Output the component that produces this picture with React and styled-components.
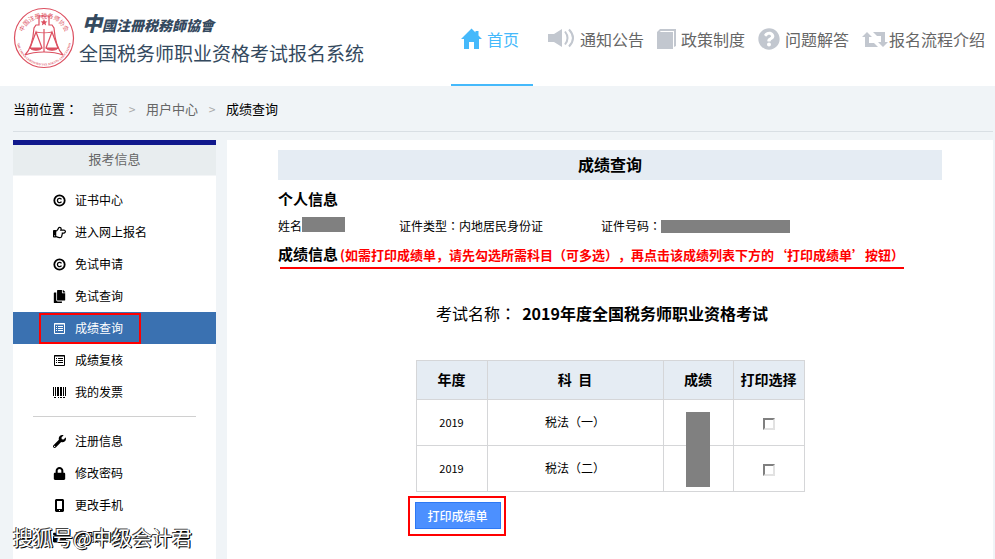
import React from "react";
import styled, { createGlobalStyle } from "styled-components";
import {
  FaRegHandPointRight,
  FaCopy,
  FaWrench,
  FaLock,
  FaQuestionCircle,
  FaEnvelope,
} from "react-icons/fa";

const GlobalStyle = createGlobalStyle`
  * {
    box-sizing: border-box;
  }

  body {
    margin: 0;
    background: #f0f4f7;
    color: #000;
    font-family: "Noto Sans CJK SC", "Noto Sans", sans-serif;
    font-size: 12px;
    text-spacing-trim: space-all;
  }

  a {
    color: inherit;
    text-decoration: none;
  }
`;

const Page = styled.div`
  position: relative;
  min-height: 100vh;
  display: flex;
  flex-direction: column;
`;

const Header = styled.header`
  height: 86px;
  padding: 0 10px 0 13px;
  display: flex;
  justify-content: space-between;
  background: #fff;
`;

const Brand = styled.a`
  display: flex;
  align-items: flex-start;
  gap: 4px;
  padding-top: 7px;
  color: #34495e;
  white-space: nowrap;
`;

const BrandText = styled.div`
  display: flex;
  flex-direction: column;
`;

const Association = styled.span`
  padding-left: 3px;
  font-size: 14px;
  font-style: italic;
  font-weight: 900;
  line-height: 32px;

  &::first-letter {
    font-size: 20px;
  }
`;

const SystemName = styled.span`
  font-size: 19px;
  line-height: 24px;
`;

const Nav = styled.nav`
  display: flex;
  gap: 13px;
`;

const NavLink = styled.a`
  display: flex;
  align-items: flex-start;
  gap: ${(props) => props.$gap || 5}px;
  margin-right: ${(props) => (props.$active ? 2 : 0)}px;
  padding: ${(props) => (props.$active ? "27px 14px 0 10px" : "27px 0 0")};
  border-bottom: 2px solid ${(props) => (props.$active ? "#45b9fb" : "transparent")};
  color: ${(props) => (props.$active ? "#45b9fb" : "#666")};
  font-size: 16px;
  line-height: 24px;
  white-space: nowrap;

  svg {
    height: 24px;
    color: ${(props) => (props.$active ? "#45b9fb" : "#c2c7cf")};
  }
`;

const Breadcrumb = styled.nav`
  display: flex;
  gap: 14px;
  height: 46px;
  margin: 0 2px 0 13px;
  border-bottom: 1px solid #d9dfe4;
  color: #666;
  font-size: 13px;
  line-height: 45px;

  strong {
    color: #000;
    font-weight: 400;
  }

  i {
    width: 0;
    display: flex;
    justify-content: center;
    color: #aaa;
    font-style: normal;
    font-size: 12px;
  }
`;

// the TC face sets the colon in the middle of its box
const Colon = styled.span`
  font-family: "Noto Sans CJK TC", sans-serif;
`;

const Body = styled.div`
  flex: 1;
  display: flex;
  gap: 11px;
  padding: 8px 2px 0 13px;
`;

const Sidebar = styled.aside`
  flex: 0 0 203px;
  background: #fff;
  border-top: 5px solid #10188c;
`;

const SidebarTitle = styled.h2`
  margin: 0;
  height: 31px;
  background: #e8edef;
  border-bottom: 1px solid #f3f5f7;
  color: #666;
  font-size: 13px;
  font-weight: 400;
  line-height: 28px;
  text-align: center;
`;

const Menu = styled.ul`
  list-style: none;
  margin: 0;
  padding: 8px 0;
`;

const Divider = styled.hr`
  margin: 0 20px;
  border: 0;
  border-top: 1px solid #d0d0d0;
`;

const MenuLink = styled.a`
  display: flex;
  align-items: center;
  height: 32px;
  padding-left: 26px;
  background: ${(props) => (props.$active ? "#3a71b1" : "transparent")};
  color: ${(props) => (props.$active ? "#fff" : "#000")};
`;

const MenuLabel = styled.span`
  display: flex;
  align-items: center;
  gap: 9px;
  height: 31px;
  padding: 0 16px 0 12px;
  border: 2px solid ${(props) => (props.$marked ? "#f00" : "transparent")};
  line-height: 20px;

  svg {
    width: 13px;
    height: 13px;
  }
`;

const Main = styled.main`
  flex: 1;
  padding: 10px 51px 0;
  background: #fff;
`;

const PageTitle = styled.h1`
  margin: 0 0 8px;
  padding-bottom: 2px;
  background: #e5ecf3;
  font-size: 16px;
  line-height: 28px;
  text-align: center;
`;

const SectionTitle = styled.h2`
  margin: 0;
  font-size: 15px;
  line-height: 22px;
  white-space: nowrap;
`;

const Notice = styled.small`
  margin-left: 2px;
  color: #f00;
  font-size: 13px;
`;

const Underlined = styled.div`
  width: fit-content;
  margin-left: 2px;
  border-bottom: 2px solid #f00;

  ${SectionTitle} {
    margin-left: -2px;
    line-height: 24px;
  }
`;

const Info = styled.dl`
  display: grid;
  grid-template-columns: 121px 202px 1fr;
  margin: 0;
  padding: 5px 0;
  line-height: 22px;

  div {
    display: flex;
    align-items: center;
  }

  dd {
    margin: 0;
  }
`;

const Redacted = styled.span`
  display: block;
  width: ${(props) => props.$width}px;
  height: ${(props) => props.$height}px;
  margin-bottom: ${(props) => props.$lift || 0}px;
  background: #808080;
`;

const ExamName = styled.p`
  margin: 32px 0 35px;
  padding-right: 16px;
  font-size: 16px;
  line-height: 24px;
  text-align: center;

  strong {
    margin-left: 6px;
  }
`;

const Results = styled.div`
  width: 389px;
  margin: 0 auto;
`;

const ScoreTable = styled.table`
  width: 100%;
  table-layout: fixed;
  border-collapse: collapse;

  th,
  td {
    padding: 0 0 2px;
    border: 1px solid #d5d6d8;
    text-align: center;
  }

  th {
    height: 39px;
    background: #e5ecf3;
    font-size: 14px;
    white-space: pre;
  }

  td {
    height: 46px;
  }
`;

const Year = styled.td`
  font-size: 11px;
`;

const ScoreCell = styled.td`
  position: relative;
`;

const ScoreMask = styled.span`
  position: absolute;
  z-index: 1;
  top: 12px;
  left: 22px;
  width: 24px;
  height: 75px;
  background: #808080;
`;

const Check = styled.input`
  appearance: none;
  display: block;
  width: 12px;
  height: 12px;
  margin: 4px auto 0;
  border: 2px solid;
  border-color: #808080 #e2e2e2 #e2e2e2 #808080;
  background: #fff;

  &:checked {
    background: #4c90ff;
  }
`;

const PrintFrame = styled.div`
  width: fit-content;
  margin: 4px 0 0 -8px;
  padding: 4px 3px 5px 5px;
  border: 2px solid #f00;
`;

const PrintButton = styled.button`
  display: block;
  height: 27px;
  padding: 0 12px;
  border: 1px solid #2d78f4;
  background: #4c90ff;
  color: #fff;
  font: 500 12px/25px "Noto Sans CJK SC", sans-serif;
  cursor: pointer;
`;

const Watermark = styled.div`
  position: absolute;
  left: 13px;
  bottom: 8px;
  color: #fff;
  font-size: 20px;
  line-height: 30px;
  text-shadow: -1px -1px 0 #444, 1px 1px 0 #000, 1px 0 0 #222;
  white-space: nowrap;
  pointer-events: none;
`;

const Seal = () => (
  <svg width="62" height="62" viewBox="0 0 62 62" fill="none" stroke="#dc4f60">
    <circle cx="31" cy="31" r="29.5" strokeWidth="1.2" />
    <path
      d="M26 9h10v9h3l2 3c1 14 4 22 9 27M26 9v9h-3l-2 3c-1 14-4 22-9 27M12 48c10-4 28-4 38 0"
      strokeWidth="1.2"
    />
    <path d="M31 22v23M23 25c4 1 12 1 16 0M23 25l-6 16h12zM39 25l-6 16h12z" strokeWidth="1.2" />
    <path d="M17 41c2 3 10 3 12 0M33 41c2 3 10 3 12 0" fill="#dc4f60" />
    <path d="M31 12l1 2.200 2.400.2-1.800 1.600.5 2.400-2.100-1.300-2.100 1.300.5-2.400-1.800-1.600 2.400-.2z" fill="#dc4f60" stroke="none" />
    <path id="seal-top" d="M8.500 33A22.500 22.500 0 1 1 53.500 33" stroke="none" />
    <path id="seal-bottom" d="M4.200 26A27.300 27.300 0 1 0 57.800 26" stroke="none" />
    <g fill="#dc4f60" stroke="none">
      <text fontSize="6" textAnchor="middle">
        <textPath href="#seal-top" startOffset="50%">中国注册税务师协会</textPath>
      </text>
      <text fontSize="3" fontFamily="Liberation Serif" fontWeight="700" textAnchor="middle">
        <textPath href="#seal-bottom" startOffset="50%">THE CHINA CERTIFIED TAX AGENTS ASSOCIATION</textPath>
      </text>
    </g>
  </svg>
);

const HomeIcon = () => (
  <svg width="21" viewBox="0 0 21 24" fill="currentColor">
    <path d="M10.500 1.500L0 12h3v10h5v-7h5v7h5V12h3l-3.500-3.500V4h-3v1.500z" />
  </svg>
);

const SpeakerIcon = () => (
  <svg width="27" viewBox="0 0 27 24" fill="currentColor">
    <path d="M0 7h6l8-5v18l-8-5H0z" />
    <path d="M17 4.500q5 6.500 0 13M21 2.500q8 8.500 0 17" fill="none" stroke="currentColor" strokeWidth="2" />
  </svg>
);

const BookIcon = () => (
  <svg width="19" viewBox="0 0 19 24" fill="currentColor">
    <path d="M0 5l3-3h16v17l-2 1V4H4L2.500 5H16v17H0z" />
  </svg>
);

const FlowIcon = () => (
  <svg width="26" viewBox="0 0 26 24" fill="currentColor">
    <path d="M5 5l5 5H7v6h5l4 4H3V10H0zM11 5h12v10h3l-5 5-5-5h3V9h-4z" />
  </svg>
);

const CopyrightIcon = () => (
  <svg viewBox="0 0 13 13" fill="none" stroke="currentColor">
    <circle cx="6.500" cy="6.500" r="5.200" strokeWidth="1.800" />
    <path d="M8.500 5.300a2.200 2.200 0 1 0 0 2.400" strokeWidth="1.300" />
  </svg>
);

const ListIcon = () => (
  <svg viewBox="0 0 13 13" fill="none" stroke="currentColor">
    <path d="M1.500 1.500h10v10h-10zM1 2h11M3 4.500h1M5 4.500h5M3 6.500h1M5 6.500h5M3 8.500h1M5 8.500h5" />
  </svg>
);

const BarcodeIcon = () => (
  <svg viewBox="0 0 13 13" fill="currentColor">
    <path d="M0 1h1v9H0zM2 1h1v9H2zM4 1h2v9H4zM7 1h2v9H7zM10 1h1v9h-1zM12 1h1v9h-1zM1 11h2v1H1zM5 11h1v1H5zM7 11h2v1H7zM10 11h2v1h-2z" />
  </svg>
);

const PhoneIcon = () => (
  <svg viewBox="0 0 13 13" fill="currentColor">
    <path fillRule="evenodd" d="M3 0h7l1 1v11l-1 1H3l-1-1V1zM4 2v8h5V2zM6 11v1h1v-1z" />
  </svg>
);

const examMenu = [
  { label: "证书中心", icon: CopyrightIcon },
  { label: "进入网上报名", icon: FaRegHandPointRight },
  { label: "免试申请", icon: CopyrightIcon },
  { label: "免试查询", icon: FaCopy },
  { label: "成绩查询", icon: ListIcon, active: true },
  { label: "成绩复核", icon: ListIcon },
  { label: "我的发票", icon: BarcodeIcon },
];

const accountMenu = [
  { label: "注册信息", icon: FaWrench },
  { label: "修改密码", icon: FaLock },
  { label: "更改手机", icon: PhoneIcon },
  { label: "更改邮箱", icon: FaEnvelope },
];

const scores = [
  { year: "2019", subject: "税法（一）" },
  { year: "2019", subject: "税法（二）" },
];

const MenuList = ({ items }) => (
  <Menu>
    {items.map(({ label, icon: Icon, active }) => (
      <li key={label}>
        <MenuLink href="#" $active={active}>
          <MenuLabel $marked={active}>
            <Icon />
            {label}
          </MenuLabel>
        </MenuLink>
      </li>
    ))}
  </Menu>
);

const App = () => {
  return (
    <Page>
      <GlobalStyle />
      <Header>
        <Brand href="#">
          <Seal />
          <BrandText>
            <Association>中國注冊税務師協會</Association>
            <SystemName>全国税务师职业资格考试报名系统</SystemName>
          </BrandText>
        </Brand>
        <Nav>
          <NavLink href="#" $active>
            <HomeIcon />
            首页
          </NavLink>
          <NavLink href="#">
            <SpeakerIcon />
            通知公告
          </NavLink>
          <NavLink href="#">
            <BookIcon />
            政策制度
          </NavLink>
          <NavLink href="#">
            <FaQuestionCircle size={22} />
            问题解答
          </NavLink>
          <NavLink href="#" $gap={1}>
            <FlowIcon />
            报名流程介绍
          </NavLink>
        </Nav>
      </Header>
      <Breadcrumb>
        <strong>
          当前位置<Colon>：</Colon>
        </strong>
        <a href="#">首页</a>
        <i>&gt;</i>
        <a href="#">用户中心</a>
        <i>&gt;</i>
        <strong>成绩查询</strong>
      </Breadcrumb>
      <Body>
        <Sidebar>
          <SidebarTitle>报考信息</SidebarTitle>
          <MenuList items={examMenu} />
          <Divider />
          <MenuList items={accountMenu} />
        </Sidebar>
        <Main>
          <PageTitle>成绩查询</PageTitle>
          <SectionTitle>个人信息</SectionTitle>
          <Info>
            <div>
              <dt>姓名</dt>
              <dd>
                <Redacted $width={43} $height={15} $lift={4} />
              </dd>
            </div>
            <div>
              <dt>
                证件类型<Colon>：</Colon>
              </dt>
              <dd>内地居民身份证</dd>
            </div>
            <div>
              <dt>
                证件号码<Colon>：</Colon>
              </dt>
              <dd>
                <Redacted $width={129} $height={13} />
              </dd>
            </div>
          </Info>
          <Underlined>
            <SectionTitle>
              成绩信息
              <Notice>(如需打印成绩单，请先勾选所需科目（可多选），再点击该成绩列表下方的‘打印成绩单’按钮）</Notice>
            </SectionTitle>
          </Underlined>
          <ExamName>
            考试名称<Colon>：</Colon>
            <strong>2019年度全国税务师职业资格考试</strong>
          </ExamName>
          <Results>
            <ScoreTable>
              <colgroup>
                <col width="71" />
                <col width="176" />
                <col width="70" />
                <col width="71" />
              </colgroup>
              <thead>
                <tr>
                  <th>年度</th>
                  <th>科&nbsp;&nbsp;目</th>
                  <th>成绩</th>
                  <th>打印选择</th>
                </tr>
              </thead>
              <tbody>
                {scores.map((score, index) => (
                  <tr key={score.subject}>
                    <Year>{score.year}</Year>
                    <td>{score.subject}</td>
                    <ScoreCell>{index === 0 && <ScoreMask />}</ScoreCell>
                    <td>
                      <Check type="checkbox" aria-label={score.subject} />
                    </td>
                  </tr>
                ))}
              </tbody>
            </ScoreTable>
            <PrintFrame>
              <PrintButton type="button">打印成绩单</PrintButton>
            </PrintFrame>
          </Results>
        </Main>
      </Body>
      <Watermark>搜狐号@中级会计君</Watermark>
    </Page>
  );
};

export default App;
